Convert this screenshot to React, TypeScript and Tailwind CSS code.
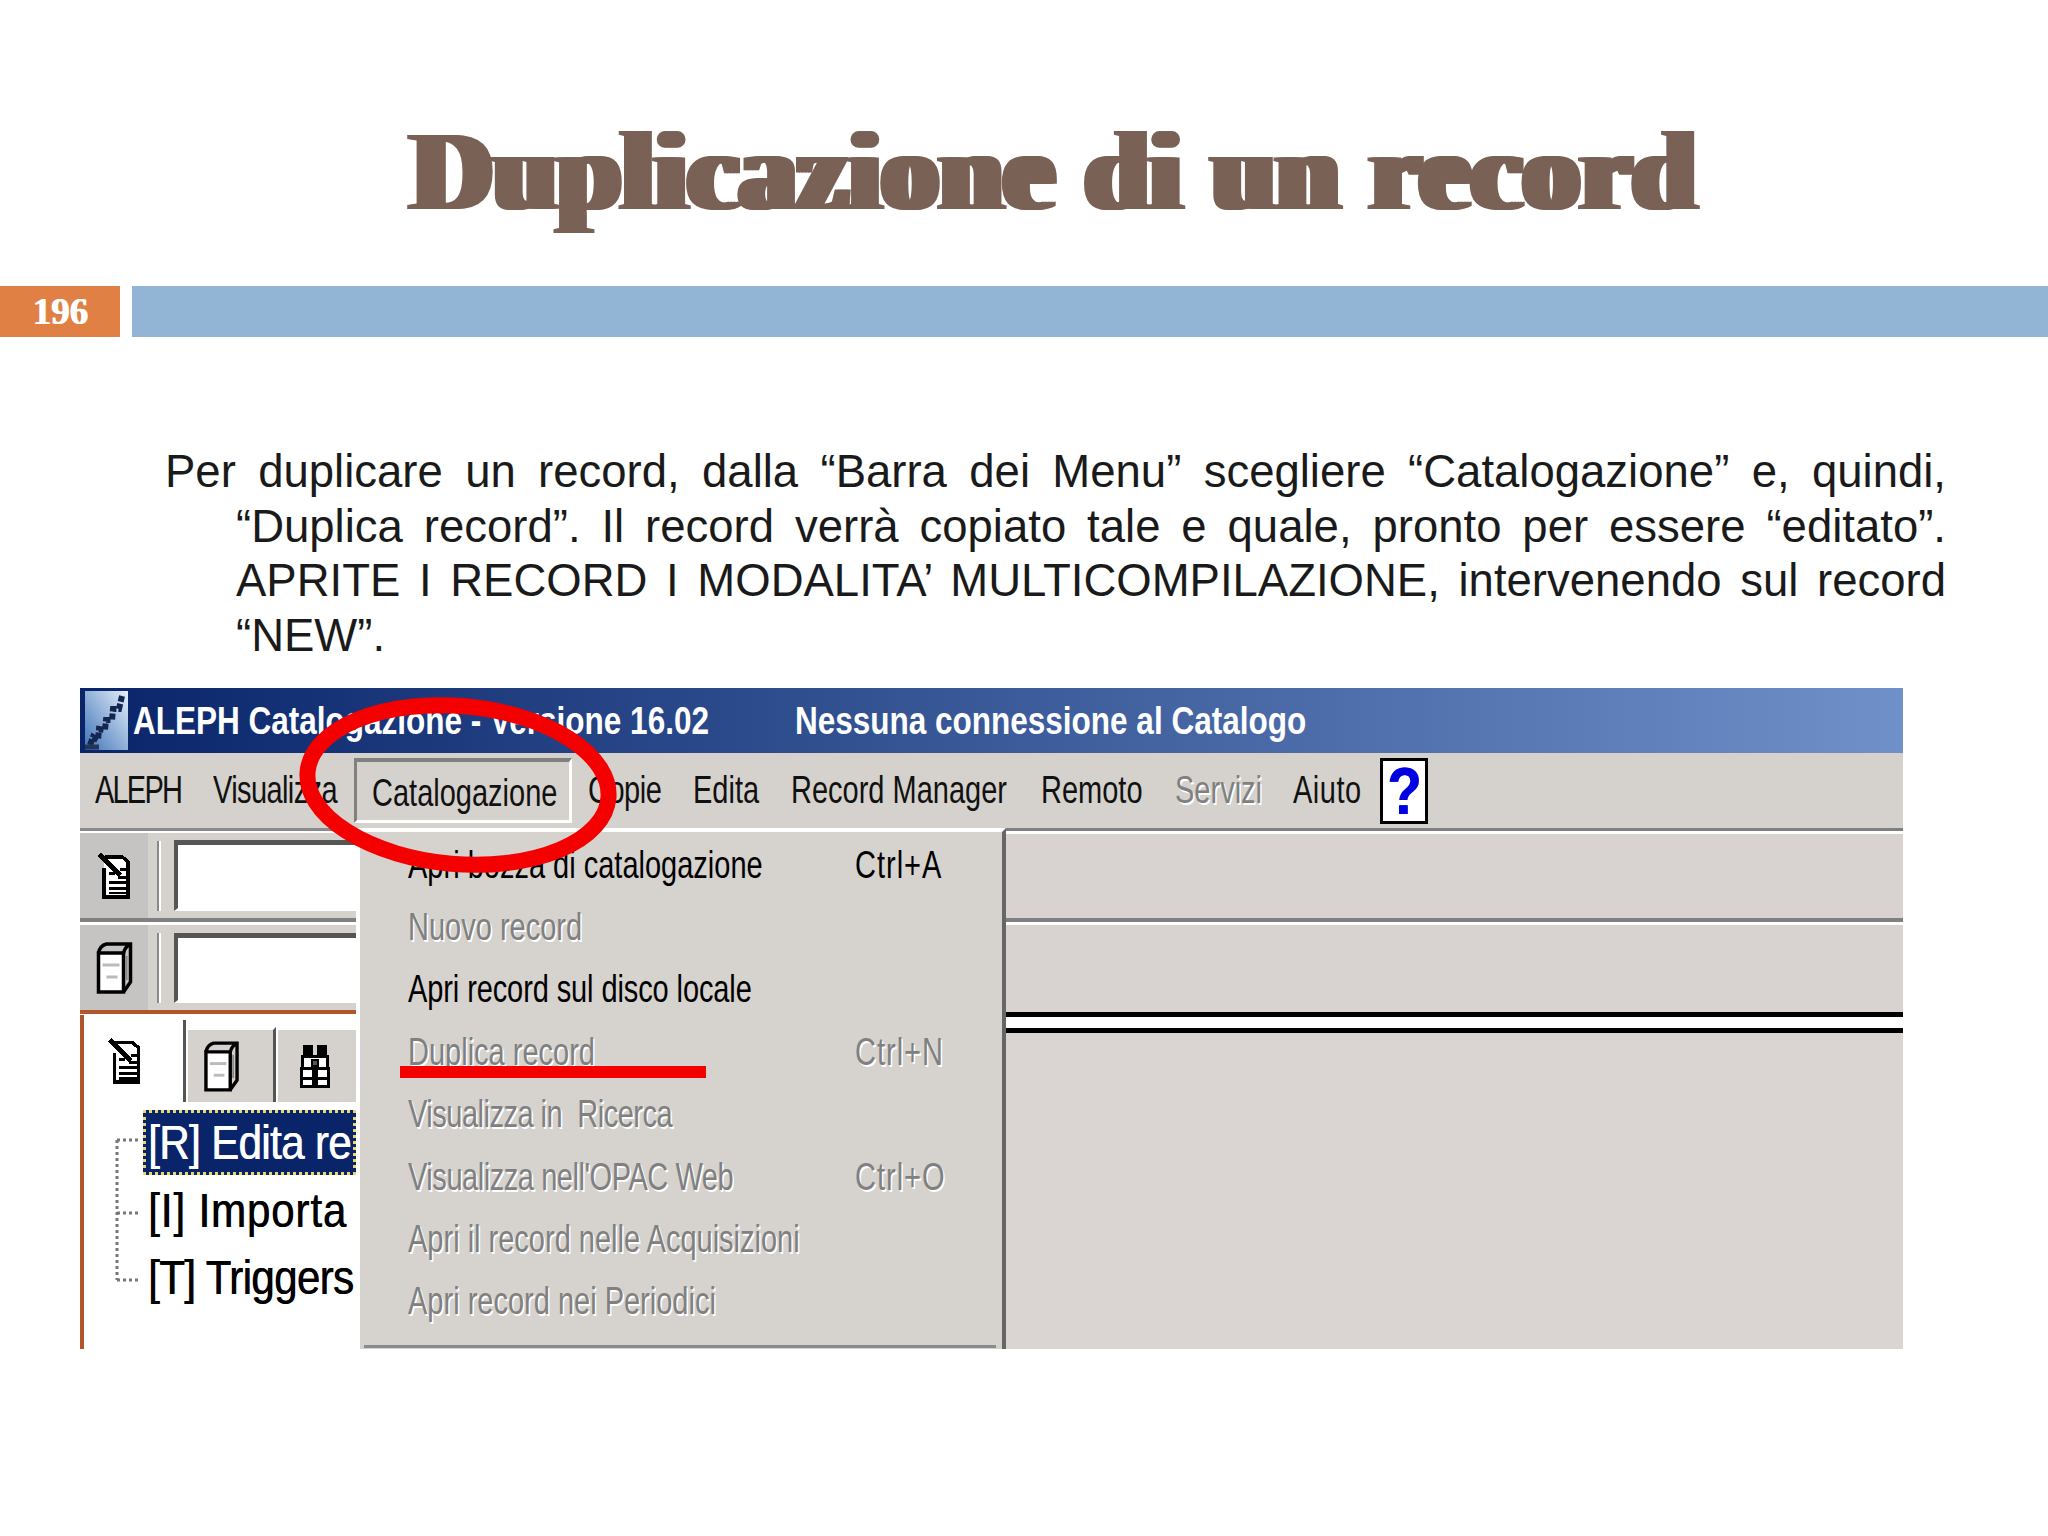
import React from "react";

const pixelFont = "font-['Liberation_Sans',sans-serif]";

const DocIcon = ({ className }: { className: string }) => (
  <svg viewBox="0 0 36 48" className={className} shapeRendering="crispEdges" fill="none" stroke="#000">
    <path d="M8 5h18l6 5v36H7V16" strokeWidth="3.5" fill="#fff" />
    <path d="M2 2l22 22" strokeWidth="5" />
    <path d="M12 22h6M24 18h6M22 26h8M12 31h18M12 37h18M12 42h18" strokeWidth="3" />
  </svg>
);

const CopiesIcon = ({ className }: { className: string }) => (
  <svg viewBox="0 0 36 52" className={className} fill="none" stroke="#000">
    <path d="M2 11h25v39H2z" strokeWidth="3.5" fill="#fff" />
    <path d="M2 11c1-5 4-8 8-9h24v38l-7 10M27 11c1-4 3-7 7-9" strokeWidth="3.5" />
    <path d="M30 14v24" strokeWidth="2" stroke="#888" />
    <path d="M6 23h17" strokeWidth="3" stroke="#bbb" />
    <path d="M10 35h11" strokeWidth="3" stroke="#bbb" />
  </svg>
);

const BinocularsIcon = ({ className }: { className: string }) => (
  <svg viewBox="0 0 32 44" className={className} shapeRendering="crispEdges" fill="none" stroke="#000">
    <path d="M5 2h7v10H5zM20 2h7v10h-7z" strokeWidth="3" fill="#000" />
    <path d="M3 12h26v12H3z" strokeWidth="3" fill="#fff" />
    <path d="M2 24h12v18H2zM18 24h12v18H18z" strokeWidth="3" fill="#fff" />
    <path d="M13 15h6v6h-6z" strokeWidth="2" fill="#555" />
    <path d="M4 34h9M19 34h9" strokeWidth="3" />
  </svg>
);

const AppIcon = () => (
  <svg viewBox="0 0 43 59" className="h-[59px] w-[43px] shrink-0">
    <defs>
      <linearGradient id="appBg" x1="0" y1="1" x2="1" y2="0">
        <stop offset="0" stopColor="#3f74b8" />
        <stop offset="1" stopColor="#e4eefa" />
      </linearGradient>
    </defs>
    <rect width="43" height="59" fill="url(#appBg)" />
    <path d="M5 54L8 46L13 49L14 38L20 39L21 29L27 29L28 18L34 18L37 5" stroke="#14264f" strokeWidth="6" fill="none" strokeDasharray="6 2" />
    <path d="M0 56h14" stroke="#26345c" strokeWidth="5" />
  </svg>
);

const menuItems = [
  { label: "ALEPH", width: "w-[118px]", track: "tracking-[-1.8px]" },
  { label: "Visualizza", width: "w-[141px]", track: "tracking-[-0.6px]" },
];

const menuItemsAfter = [
  { label: "Copie", width: "w-[105px]", off: false, track: "tracking-[-0.5px]" },
  { label: "Edita", width: "w-[98px]", off: false, track: "" },
  { label: "Record Manager", width: "w-[250px]", off: false, track: "" },
  { label: "Remoto", width: "w-[134px]", off: false, track: "" },
  { label: "Servizi", width: "w-[118px]", off: true, track: "" },
  { label: "Aiuto", width: "w-[87px]", off: false, track: "tracking-[0.5px]" },
];

const dropdown = [
  { label: "Apri bozza di catalogazione", key: "Ctrl+A", off: false, track: "" },
  { label: "Nuovo record", key: "", off: true, track: "" },
  { label: "Apri record sul disco locale", key: "", off: false, track: "tracking-[-0.1px]" },
  { label: "Duplica record", key: "Ctrl+N", off: true, track: "" },
  { label: "Visualizza in  Ricerca", key: "", off: true, track: "tracking-[-0.5px]" },
  { label: "Visualizza nell'OPAC Web", key: "Ctrl+O", off: true, track: "tracking-[-0.45px]" },
  { label: "Apri il record nelle Acquisizioni", key: "", off: true, track: "" },
  { label: "Apri record nei Periodici", key: "", off: true, track: "" },
];

const disabledText = "text-[#808080] [text-shadow:1.5px_1.5px_0_#fff]";

const ToolbarRow = ({ icon, inputHeight }: { icon: React.ReactNode; inputHeight: string }) => (
  <div className="flex h-[85px] items-center bg-[#d5d2cd]">
    <div className="flex h-full w-[68px] items-center justify-center bg-[#c6c4c2]">{icon}</div>
    <div className="ml-[9px] h-[70px] w-[4px] border-l-2 border-[#8a8a8a] bg-white" />
    <div className={`ml-[13px] flex-1 border-t-[5px] border-b-[3px] border-l-[4px] border-t-[#555] border-b-white border-l-[#555] bg-white ${inputHeight}`} />
  </div>
);

export default function App() {
  return (
    <div className="h-[1536px] w-[2048px] overflow-hidden bg-white">
      <div className="ml-[132px] w-[1844px] pt-[115px] pb-[59px]">
        <h1 className="text-center font-['Liberation_Serif',serif] text-[112px] leading-[112px] font-bold tracking-[1.85px] whitespace-nowrap text-[#7a6155] [text-shadow:-6px_0_0_#7a6155,-3px_0_0_#7a6155,3px_0_0_#7a6155,6px_0_0_#7a6155]">
          Duplicazione di un record
        </h1>
      </div>

      <div className="flex h-[51px] gap-[12px]">
        <div className="flex w-[120px] items-center justify-center bg-[#e08045] font-['Liberation_Serif',serif] text-[37px] font-bold text-white [text-shadow:1px_0_0_#fff]">
          196
        </div>
        <div className="flex-1 bg-[#93b5d5]" />
      </div>

      <p className="mt-[108px] ml-[165px] w-[1781px] pl-[71px] -indent-[71px] text-justify font-['Liberation_Sans',sans-serif] text-[45.5px] leading-[54.5px] text-[#1a1a1a]">
        Per duplicare un record, dalla “Barra dei Menu” scegliere “Catalogazione” e, quindi, “Duplica record”. Il record verrà copiato tale e quale, pronto per essere “editato”. APRITE I RECORD I MODALITA’ MULTICOMPILAZIONE, intervenendo sul record “NEW”.
      </p>

      <div className={`relative mt-[25px] ml-[80px] flex h-[661px] w-[1823px] flex-col overflow-hidden ${pixelFont}`}>
        {/* barra del titolo */}
        <div className="flex h-[65px] items-center bg-linear-to-r from-[#0a246a] to-[#6f90c8] pl-[5px] text-[31.5px] leading-none font-bold text-white">
          <AppIcon />
          <span className="ml-[5px] w-[662px] scale-y-[1.25] whitespace-nowrap">ALEPH Catalogazione - Versione 16.02</span>
          <span className="scale-y-[1.25] whitespace-nowrap">Nessuna connessione al Catalogo</span>
        </div>

        {/* barra dei menu */}
        <div className="flex h-[75px] items-center bg-[#d5d2cd] pl-[15px] text-[29px] leading-none text-[#111]">
          {menuItems.map((m) => (
            <span key={m.label} className={`${m.width} ${m.track} scale-y-[1.35] whitespace-nowrap`}>
              {m.label}
            </span>
          ))}
          <div className="flex h-[65px] w-[218px] items-center border-t-[4px] border-r-[3px] border-b-[3px] border-l-[3px] border-t-[#808080] border-r-white border-b-white border-l-[#808080] pt-[5px] pl-[15px]">
            <span className="scale-y-[1.35] whitespace-nowrap">Catalogazione</span>
          </div>
          <span className="w-[16px]" />
          {menuItemsAfter.map((m) => (
            <span key={m.label} className={`${m.width} ${m.track} scale-y-[1.35] whitespace-nowrap ${m.off ? disabledText : ""}`}>
              {m.label}
            </span>
          ))}
          <div className="flex h-[66px] w-[48px] items-center justify-center border-[3px] border-black bg-white text-[56px] font-bold text-[#0000e0] [text-shadow:1px_0_0_#0000e0]">
            <span className="scale-y-[1.2]">?</span>
          </div>
        </div>

        <div className="flex flex-1">
          {/* colonna sinistra */}
          <div className="flex w-[276px] flex-col overflow-hidden">
            <div className="h-[5px] border-t-[3px] border-[#8a8a8a] bg-white" />
            <ToolbarRow icon={<DocIcon className="h-[47px] w-[35px]" />} inputHeight="h-[71px]" />
            <div className="h-[7px] border-t-[4px] border-[#808080] bg-white" />
            <ToolbarRow icon={<CopiesIcon className="h-[52px] w-[37px]" />} inputHeight="h-[70px]" />
            <div className="h-[5px] border-t-[4px] border-[#b0562a] bg-white" />
            <div className="flex flex-1 flex-col border-l-[4px] border-[#b0562a] bg-white pl-[4px]">
              <div className="flex h-[87px] items-end pt-[5px]">
                <div className="flex h-full w-[98px] items-center border-r-[3px] border-[#555] bg-white pl-[19px]">
                  <DocIcon className="h-[46px] w-[36px]" />
                </div>
                <div className="ml-[2px] flex h-[75px] w-[88px] items-center border-t-[3px] border-r-[3px] border-t-white border-r-[#555] bg-[#d5d2cd] pl-[16px]">
                  <CopiesIcon className="h-[51px] w-[35px]" />
                </div>
                <div className="ml-[2px] flex h-[75px] flex-1 items-center border-t-[3px] border-t-white bg-[#d5d2cd] pl-[21px]">
                  <BinocularsIcon className="h-[43px] w-[32px]" />
                </div>
              </div>
              <div className="relative mt-[8px] pl-[55px] text-[42px] leading-none [text-shadow:0.6px_0_0_currentColor]">
                <svg className="absolute top-0 left-0 h-[190px] w-[55px]" fill="none" stroke="#777" strokeWidth="3" strokeDasharray="3 3">
                  <path d="M29 30V170M29 30H51M29 103H51M29 170H51" />
                </svg>
                <div className="flex h-[65px] items-center border-[3px] border-dotted border-[#e8d870] bg-[#0a246a] pl-[2px] tracking-[-0.6px] whitespace-nowrap text-white">
                  <span className="scale-y-[1.15]">[R] Edita re</span>
                </div>
                <div className="flex h-[71px] items-center pl-[5px] tracking-[0.9px] whitespace-nowrap text-black">
                  <span className="scale-y-[1.15]">[I] Importa</span>
                </div>
                <div className="flex h-[63px] items-center pl-[5px] tracking-[-0.6px] whitespace-nowrap text-black">
                  <span className="scale-y-[1.15]">[T] Triggers</span>
                </div>
              </div>
            </div>
          </div>

          {/* menu Catalogazione */}
          <div className="flex w-[650px] flex-col border-t-[4px] border-r-[4px] border-l-[4px] border-t-white border-r-[#666] border-l-white bg-[#d6d2ce] pt-[2px] pl-[48px] text-[29px] leading-none">
            {dropdown.map((d) => (
              <div key={d.label} className={`flex h-[62.4px] shrink-0 items-center whitespace-pre ${d.off ? disabledText : "text-black"}`}>
                <span className={`w-[447px] scale-y-[1.35] ${d.track}`}>{d.label}</span>
                <span className="scale-y-[1.35] tracking-[1px]">{d.key}</span>
              </div>
            ))}
            <div className="mt-auto mb-[1px] -ml-[44px] h-[3px] w-[632px] bg-[#8a8a8a]" />
          </div>

          {/* area destra */}
          <div className="flex flex-1 flex-col bg-[#d8d3d1]">
            <div className="h-[6px] border-t-[3px] border-[#808080] bg-white" />
            <div className="h-[84px]" />
            <div className="h-[7px] border-t-[4px] border-[#808080] bg-white" />
            <div className="h-[87px]" />
            <div className="h-[21px] border-t-[5px] border-b-[5px] border-black bg-white" />
            <div className="flex-1 bg-[#dad4d2]" />
          </div>
        </div>

        {/* segni rossi */}
        <svg className="absolute top-0 left-0 h-[661px] w-[1823px]" fill="none" viewBox="0 0 1823 661">
          <ellipse cx="378" cy="97" rx="151" ry="79" stroke="#f40000" strokeWidth="16" transform="rotate(5 378 97)" />
        </svg>
        <div className="absolute top-[378px] left-[320px] h-[12px] w-[306px] bg-[#f40000]" />
      </div>
    </div>
  );
}
